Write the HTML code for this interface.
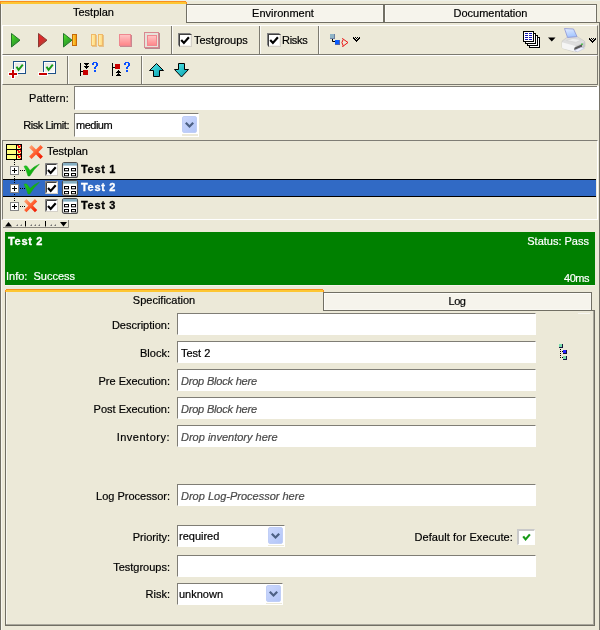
<!DOCTYPE html>
<html><head><meta charset="utf-8">
<style>
*{box-sizing:border-box;margin:0;padding:0}
html,body{width:600px;height:630px;overflow:hidden;background:#ece9d8;font-family:"Liberation Sans",sans-serif;font-size:11px;color:#000}
.a{position:absolute}
svg{position:absolute;overflow:visible}
.t{position:absolute;white-space:nowrap;line-height:13px;font-size:11px;will-change:transform;-webkit-text-stroke:.2px currentColor}
.r{text-align:right}
.in{position:absolute;background:#fff;border-top:1px solid #7f7d75;border-left:1px solid #7f7d75;border-bottom:1px solid #fff;border-right:1px solid #fff}
.it{font-style:italic;color:#4a4a4a}
.sep{position:absolute;width:2px;border-left:1px solid #7c7a70;border-right:1px solid #fbfaf5}
.cb{position:absolute;width:13px;height:13px;background:#fff;border-top:1px solid #808080;border-left:1px solid #808080;border-right:1px solid #f4f2ea;border-bottom:1px solid #f4f2ea}
.cb:before{content:"";position:absolute;left:0;top:0;width:11px;height:11px;border-top:1px solid #404040;border-left:1px solid #404040;border-right:1px solid #d4d0c8;border-bottom:1px solid #d4d0c8}
.dd:after{content:"";position:absolute;left:2px;top:5px;width:9px;height:6px;background:#4d6185;clip-path:polygon(0 1.600px,1.600px 0,4.500px 2.900px,7.400px 0,9px 1.600px,4.500px 6px)}
.dd{position:absolute;width:15px;height:17px;background:linear-gradient(135deg,#cbd7fc,#b3c6f8);border:1px solid #c0cef6;border-radius:2px}
.tab{position:absolute;background:#f6f4ec;border:1px solid #716f64;box-shadow:inset 1px 1px 0 #fdfcf8,inset -1px -1px 0 #f9f8f2}
.pm{position:absolute;width:9px;height:9px;background:#fff;border:1px solid #848484}
.pm:before{content:"";position:absolute;left:1px;top:3px;width:5px;height:1px;background:#000}
.pm:after{content:"";position:absolute;left:3px;top:1px;width:1px;height:5px;background:#000}
.hd{position:absolute;height:1px;width:5px;background:repeating-linear-gradient(90deg,#000 0 1px,transparent 1px 2px)}
</style></head><body>
<!-- window edges -->
<div class="a" style="left:0;top:0;width:600px;height:1px;background:#eef0e8"></div>
<div class="a" style="left:0;top:4px;width:1px;height:626px;background:#716f64"></div>
<div class="a" style="left:1px;top:4px;width:1px;height:626px;background:#f7f6ef"></div>
<div class="a" style="left:599px;top:22px;width:1px;height:608px;background:#75736a"></div>
<!-- top tabs -->
<div class="a" style="left:0;top:1px;width:186px;height:1px;background:#f98f20"></div>
<div class="a" style="left:0;top:2px;width:187px;height:2px;background:#fdc632"></div>
<div class="a" style="left:0;top:2px;width:1px;height:2px;background:#f98f20"></div>
<div class="a" style="left:186px;top:2px;width:1px;height:2px;background:#f98f20"></div>
<div class="tab" style="left:186px;top:4px;width:198px;height:19px"></div>
<div class="tab" style="left:384px;top:4px;width:213px;height:19px"></div>
<div class="a" style="left:596px;top:22px;width:4px;height:1px;background:#716f64"></div>
<div class="t" style="left:0;width:187px;top:6px;text-align:center">Testplan</div>
<div class="t" style="left:184px;width:198px;top:7px;text-align:center">Environment</div>
<div class="t" style="left:385px;width:211px;top:7px;text-align:center">Documentation</div>

<!-- toolbar 1 -->
<div class="a" style="left:2px;top:25px;width:596px;height:30px;border-top:1px solid #fff;border-left:1px solid #fff;border-bottom:1px solid #7c7a70;border-right:1px solid #7c7a70"></div>
<!-- toolbar 2 -->
<div class="a" style="left:2px;top:55px;width:596px;height:30px;border-top:1px solid #fff;border-left:1px solid #fff;border-bottom:1px solid #7c7a70;border-right:1px solid #7c7a70"></div>

<div class="sep" style="left:171px;top:26px;height:28px"></div>
<div class="sep" style="left:259px;top:26px;height:28px"></div>
<div class="sep" style="left:318px;top:26px;height:28px"></div>
<div class="sep" style="left:67px;top:56px;height:28px"></div>
<div class="sep" style="left:141px;top:56px;height:28px"></div>

<div class="cb" style="left:178px;top:33px"></div>
<div class="t" style="left:194px;top:34px">Testgroups</div>
<div class="cb" style="left:267px;top:33px"></div>
<div class="t" style="left:282px;top:34px;letter-spacing:-.3px">Risks</div>

<!-- ICONS1 -->
<svg style="left:0;top:0" width="600" height="90" viewBox="0 0 600 90">
<defs>
<linearGradient id="gG" x1="0" y1="0" x2="0.6" y2="1"><stop offset="0" stop-color="#5fe82a"/><stop offset=".5" stop-color="#38b828"/><stop offset="1" stop-color="#2c8a2c"/></linearGradient>
<linearGradient id="gR" x1="0" y1="0" x2="0.6" y2="1"><stop offset="0" stop-color="#f02424"/><stop offset=".5" stop-color="#d62c2c"/><stop offset="1" stop-color="#a04838"/></linearGradient>
<linearGradient id="gO" x1="0" y1="0" x2="1" y2="0"><stop offset="0" stop-color="#ffd84a"/><stop offset="1" stop-color="#f29400"/></linearGradient>
<linearGradient id="gP" x1="0" y1="0" x2="1" y2="0"><stop offset="0" stop-color="#fff0b4"/><stop offset="1" stop-color="#ffd878"/></linearGradient>
<linearGradient id="gS" x1="0" y1="0" x2="0" y2="1"><stop offset="0" stop-color="#ffc6c6"/><stop offset="1" stop-color="#ff8488"/></linearGradient>
<linearGradient id="gC" x1="0" y1="0" x2="1" y2="1"><stop offset="0" stop-color="#58eaea"/><stop offset="1" stop-color="#009aaa"/></linearGradient>
<linearGradient id="gB" x1="0" y1="0" x2="1" y2="1"><stop offset="0" stop-color="#e4e4e0"/><stop offset="1" stop-color="#fafaf8"/></linearGradient>
</defs>
<!-- play green -->
<path d="M11.5 33.5 L20 40.2 L11.5 47 Z" fill="url(#gG)" stroke="#23752a" stroke-width="1" stroke-linejoin="round"/>
<!-- play red -->
<path d="M38.5 33.5 L47 40.2 L38.5 47 Z" fill="url(#gR)" stroke="#8a3a34" stroke-width="1" stroke-linejoin="round"/>
<!-- play + bar -->
<path d="M63.5 33.5 L72 40.2 L63.5 47 Z" fill="url(#gG)" stroke="#23752a" stroke-width="1" stroke-linejoin="round"/>
<rect x="72.5" y="34.5" width="4" height="11" fill="url(#gO)" stroke="#c66a08" stroke-width="1"/>
<!-- pause -->
<rect x="92" y="35" width="5" height="12" fill="#e4b878" opacity=".8"/>
<rect x="99" y="35" width="5" height="12" fill="#e4b878" opacity=".8"/>
<rect x="91.5" y="34.5" width="4" height="11" fill="url(#gP)" stroke="#f0b868" stroke-width="1"/>
<rect x="98.5" y="34.5" width="4" height="11" fill="url(#gP)" stroke="#f0b868" stroke-width="1"/>
<!-- stop -->
<rect x="120" y="35" width="12" height="12" fill="#c88890"/>
<rect x="119.500" y="34.500" width="11" height="11" fill="url(#gS)" stroke="#ee8890" stroke-width="1"/>
<!-- stop framed -->
<rect x="145" y="33" width="15" height="16" fill="#b88890"/>
<rect x="144.500" y="32.500" width="14" height="15" fill="#e6e2da" stroke="#d88890" stroke-width="1"/>
<rect x="147.500" y="35.500" width="9" height="10" fill="url(#gS)" stroke="#f08890" stroke-width="1"/>
<!-- connector icon -->
<rect x="330" y="34" width="5" height="5" fill="#6e80a0"/>
<rect x="330" y="34" width="4" height="4" fill="#8fb4c6"/>
<path d="M332.500 39 V41.500 H335" fill="none" stroke="#000" stroke-width="1"/>
<rect x="335" y="40" width="5" height="5" fill="#5464a4"/>
<rect x="335" y="40" width="4" height="4" fill="#0a5cff"/>
<path d="M342.300 38.200 L343.300 39.200 L348 42.500 L343.300 46 L342.300 47 M343.300 39.200 Q340.500 42.500 343.300 46" fill="none" stroke="#e81010" stroke-width="1" stroke-linejoin="round"/>
<!-- double chevron -->
<path d="M353 37h1v1h-1zM355 37h1v1h-1zM357 37h1v1h-1zM359 37h1v1h-1zM353 38h1v1h-1zM354 38h1v1h-1zM356 38h1v1h-1zM358 38h1v1h-1zM359 38h1v1h-1zM354 39h1v1h-1zM355 39h1v1h-1zM357 39h1v1h-1zM358 39h1v1h-1zM355 40h1v1h-1zM356 40h1v1h-1zM357 40h1v1h-1zM356 41h1v1h-1z" fill="#000"/>
<!-- copy icon -->
<rect x="529.500" y="37.500" width="10" height="10" fill="#fff" stroke="#000"/>
<rect x="527.500" y="35.500" width="10" height="10" fill="#fff" stroke="#000"/>
<rect x="525.500" y="33.500" width="10" height="10" fill="#fff" stroke="#000"/>
<rect x="523.500" y="31.500" width="10" height="10" fill="#fff" stroke="#000"/>
<path d="M525 33.500h3M529 33.500h3M525 35.500h3M529 35.500h3M525 37.500h3M529 37.500h3M525 39.500h3M529 39.500h3" stroke="#1818b0" stroke-width="1"/>
<!-- dropdown tri -->
<path d="M548 37.500 H555.500 L551.750 41.500 Z" fill="#000"/>
<!-- printer -->
<linearGradient id="gPa" x1="0" y1="0" x2="0.300" y2="1"><stop offset="0" stop-color="#e4edff"/><stop offset="1" stop-color="#a4c6ff"/></linearGradient>
<path d="M562 42 Q562 40.500 563.500 40 L567 37.300 L577 36.500 L584.300 41 Q585 42 585 43 L585 46.500 L576.500 51.500 Q575 52 573 51.500 L563 48.500 Q562 48 562 47 Z" fill="#dedede" stroke="#c4c4c0" stroke-width=".6"/>
<path d="M562 42.300 L575.500 46 L575.500 51.700 L563 48.500 Q562 48 562 47 Z" fill="#f5f5f5"/>
<path d="M575.500 46 L585 42 L585 46.500 L575.500 51.700 Z" fill="#c9c9c9"/>
<path d="M566.500 40.500 L576 42.300 L581.500 39.800 L573 38.500 Z" fill="#efefef" stroke="#cfcfcf" stroke-width=".5"/>
<path d="M574.300 47.800 L582 44.300 L582 46.800 L574.300 50.300 Z" fill="#5a5a5a"/>
<path d="M574.500 50.300 L581 47.500 L584.500 48.200 L577.500 51.800 Z" fill="#f4f6ff" stroke="#a8b0e0" stroke-width=".4"/>
<path d="M564.500 28.500 L573.500 29 L577 36.600 L567.500 37.400 Z" fill="url(#gPa)" stroke="#8c94d4" stroke-width=".8" stroke-linejoin="round"/>
<rect x="581" y="43.600" width="2" height="1.200" fill="#40c840"/>
<!-- right chevron -->
<path d="M589 38h1v1h-1zM591 38h1v1h-1zM593 38h1v1h-1zM595 38h1v1h-1zM589 39h1v1h-1zM590 39h1v1h-1zM592 39h1v1h-1zM594 39h1v1h-1zM595 39h1v1h-1zM590 40h1v1h-1zM591 40h1v1h-1zM593 40h1v1h-1zM594 40h1v1h-1zM591 41h1v1h-1zM592 41h1v1h-1zM593 41h1v1h-1zM592 42h1v1h-1z" fill="#000"/>

<!-- toolbar 2 -->
<!-- add checked -->
<rect x="13.500" y="61.500" width="12" height="12" fill="#fff" stroke="#1c5088" stroke-width="1"/>
<rect x="15" y="63" width="9" height="9" fill="url(#gB)"/>
<path d="M16.500 66.700 L18.600 69.900 L22.800 64.700" fill="none" stroke="#179a17" stroke-width="2"/>
<path d="M11 69h4v3h3v4h-3v3h-4v-3h-3v-4h3z" fill="#fff" opacity=".92"/>
<path d="M12 70h2v3h3v2h-3v3h-2v-3h-3v-2h3z" fill="#c80000"/>
<!-- remove checked -->
<rect x="43.500" y="61.500" width="12" height="12" fill="#fff" stroke="#1c5088" stroke-width="1"/>
<rect x="45" y="63" width="9" height="9" fill="url(#gB)"/>
<path d="M46.500 66.700 L48.600 69.900 L52.800 64.700" fill="none" stroke="#179a17" stroke-width="2"/>
<rect x="38" y="72" width="10" height="4" fill="#fff" opacity=".92"/>
<rect x="39" y="73" width="8" height="2" fill="#c80000"/>
<!-- icon3 -->
<path d="M80.500 63 V76 M80.500 71.500 H83" stroke="#000" stroke-width="1"/>
<rect x="83" y="70" width="5" height="5" fill="#c80000"/>
<path d="M84 63h5v1h-1v1h-1v1h-1v-1h-1v-1h-1zM84 66h5v1h-1v1h-1v1h-1v-1h-1v-1h-1z" fill="#000"/>
<path d="M93 62h1v1h-1zM94 62h1v1h-1zM95 62h1v1h-1zM96 62h1v1h-1zM92 63h1v1h-1zM93 63h1v1h-1zM96 63h1v1h-1zM97 63h1v1h-1zM92 64h1v1h-1zM93 64h1v1h-1zM96 64h1v1h-1zM97 64h1v1h-1zM96 65h1v1h-1zM97 65h1v1h-1zM95 66h1v1h-1zM96 66h1v1h-1zM94 67h1v1h-1zM95 67h1v1h-1zM94 68h1v1h-1zM95 68h1v1h-1zM94 70h1v1h-1zM95 70h1v1h-1zM94 71h1v1h-1zM95 71h1v1h-1z" fill="#0a50ff"/>
<!-- icon4 -->
<path d="M112.500 63 V76 M112.500 67.500 H115" stroke="#000" stroke-width="1"/>
<rect x="115" y="64" width="5" height="5" fill="#c80000"/>
<path d="M116 73h5v-1h-1v-1h-1v-1h-1v1h-1v1h-1zM116 76h5v-1h-1v-1h-1v-1h-1v1h-1v1h-1z" fill="#000"/>
<path d="M125 62h1v1h-1zM126 62h1v1h-1zM127 62h1v1h-1zM128 62h1v1h-1zM124 63h1v1h-1zM125 63h1v1h-1zM128 63h1v1h-1zM129 63h1v1h-1zM124 64h1v1h-1zM125 64h1v1h-1zM128 64h1v1h-1zM129 64h1v1h-1zM128 65h1v1h-1zM129 65h1v1h-1zM127 66h1v1h-1zM128 66h1v1h-1zM126 67h1v1h-1zM127 67h1v1h-1zM126 68h1v1h-1zM127 68h1v1h-1zM126 70h1v1h-1zM127 70h1v1h-1zM126 71h1v1h-1zM127 71h1v1h-1z" fill="#0a50ff"/>
<!-- up arrow -->
<path d="M156.500 63.500 L163.500 70.500 L159.500 70.500 L159.500 76.500 L153.500 76.500 L153.500 70.500 L149.500 70.500 Z" fill="url(#gC)" stroke="#000" stroke-width="1" stroke-linejoin="round"/>
<!-- down arrow -->
<path d="M181.500 77 L188.500 69.500 L184.500 69.500 L184.500 63.500 L178.500 63.500 L178.500 69.500 L174.500 69.500 Z" fill="url(#gC)" stroke="#000" stroke-width="1" stroke-linejoin="round"/>
<!-- checkmarks in checkboxes -->
<path d="M181.200 40 L183.900 42.900 L188.900 37.300" fill="none" stroke="#000" stroke-width="2.200"/>
<path d="M270.200 40 L272.900 42.900 L277.900 37.300" fill="none" stroke="#000" stroke-width="2.200"/>
</svg>
<!-- /ICONS1 -->
<!-- ICONS2 -->

<!-- pattern -->
<div class="t r" style="left:0;width:69px;top:92px;letter-spacing:.2px">Pattern:</div>
<div class="in" style="left:74px;top:86px;width:525px;height:24px;border-right:0;border-top-color:#fff"></div><div class="a" style="left:74px;top:86px;width:523px;height:1px;background:#7f7d75"></div>
<div class="t r" style="left:0;width:69px;top:119px;letter-spacing:-.45px">Risk Limit:</div>
<div class="in" style="left:74px;top:113px;width:125px;height:24px"></div>
<div class="a" style="left:182px;top:134px;width:16px;height:2px;background:#ece9d8"></div>
<div class="t" style="left:76px;top:119px;letter-spacing:-.5px">medium</div>
<div class="dd" style="left:182px;top:116px"></div>

<!-- tree -->
<div class="a" style="left:2px;top:140px;width:596px;height:80px;border-top:1px solid #7f7d75;border-left:1px solid #7f7d75;border-bottom:1px solid #fff;border-right:1px solid #fff"></div>
<div class="t" style="left:47px;top:145px">Testplan</div>
<div class="a" style="left:3px;top:179px;width:593px;height:18px;background:#316ac5;border-top:1px solid #000;border-bottom:1px solid #000"></div>
<div class="t" style="left:81px;top:163px;font-weight:bold;letter-spacing:.7px;-webkit-text-stroke:.3px #000">Test 1</div>
<div class="t" style="left:81px;top:181px;font-weight:bold;letter-spacing:.7px;color:#fff;-webkit-text-stroke:.3px #fff">Test 2</div>
<div class="t" style="left:81px;top:199px;font-weight:bold;letter-spacing:.7px;-webkit-text-stroke:.3px #000">Test 3</div>
<!-- TREEICONS -->
<svg style="left:0;top:140px" width="600" height="90" viewBox="0 140 600 90">
<defs>
<linearGradient id="gX" x1="0" y1="0" x2="1" y2="1"><stop offset="0" stop-color="#ffa070"/><stop offset=".5" stop-color="#ff6030"/><stop offset="1" stop-color="#f01800"/></linearGradient>
<linearGradient id="gK" x1="0" y1="0" x2="1" y2="1"><stop offset="0" stop-color="#22d022"/><stop offset=".5" stop-color="#14b414"/><stop offset="1" stop-color="#0c980c"/></linearGradient>
<g id="tst">
<rect x=".5" y=".5" width="15" height="15" rx="2" fill="#fff" stroke="#505050" stroke-width="1.200"/>
<rect x="1" y="1" width="14" height="2.600" fill="#84aec2"/>
<rect x="2.500" y="6.500" width="4" height="2.300" fill="#fff" stroke="#000"/>
<rect x="9.500" y="6.500" width="4" height="2.300" fill="#fff" stroke="#000"/>
<rect x="2.500" y="11.500" width="4" height="2.300" fill="#fff" stroke="#000"/>
<rect x="9.500" y="11.500" width="4" height="2.300" fill="#fff" stroke="#000"/>
</g>
<g id="chk">
<rect x="0" y="0" width="13" height="13" fill="#fbfaf6"/>
<rect x=".5" y=".5" width="12" height="12" fill="#fff" stroke="#d4d0c8"/>
<path d="M.5 12.500V.5H12.500" fill="none" stroke="#808080"/>
<path d="M1.500 11.500V1.500H11.500" fill="none" stroke="#404040"/>
<path d="M3 7 L5.700 9.900 L10.700 4.300" fill="none" stroke="#000" stroke-width="2.200"/>
</g>
<g id="gck">
<path d="M0 2.300 Q1.500 1.500 3 2.200 L6 6.500 Q10 2.300 15.300 .2 Q9.500 5.500 5.800 12 L4 12 Q2.500 6.500 0 2.300 Z" fill="url(#gK)" stroke="#18a018" stroke-width=".5" stroke-linejoin="round"/>
</g>
<g id="rx">
<path d="M1.300 1.300 L12.700 12.700 M12.700 1.300 L1.300 12.700" stroke="url(#gX)" stroke-width="3.400" stroke-linecap="butt" fill="none"/>
</g>
</defs>
<!-- table icon -->
<rect x="6.500" y="144.500" width="15" height="15" fill="#ffff80" stroke="#000"/>
<path d="M6 149.500H22M6 154.500H22M16.500 144V160" stroke="#000"/>
<path d="M17 145h1v1h-1zM18 145h1v1h-1zM20 145h1v1h-1zM18 146h1v1h-1zM19 146h1v1h-1zM20 146h1v1h-1zM19 147h1v1h-1zM18 147h1v1h-1zM20 148h1v1h-1zM17 150h1v1h-1zM18 150h1v1h-1zM20 150h1v1h-1zM18 151h1v1h-1zM19 151h1v1h-1zM20 151h1v1h-1zM19 152h1v1h-1zM18 152h1v1h-1zM20 153h1v1h-1zM17 155h1v1h-1zM18 155h1v1h-1zM20 155h1v1h-1zM18 156h1v1h-1zM19 156h1v1h-1zM20 156h1v1h-1zM19 157h1v1h-1zM18 157h1v1h-1zM20 158h1v1h-1z" fill="#ff1818"/>
<!-- root X -->
<g transform="translate(29,145)"><use href="#rx"/></g>
<!-- dotted lines -->
<path d="M14.500 160V202" stroke="#000" stroke-dasharray="1 1"/>
<path d="M20 170.500H25M20 188.500H25M20 206.500H25" stroke="#000" stroke-dasharray="1 1"/>
<!-- plus boxes -->
<g id="pb"><rect x="10.500" y="166.500" width="8" height="8" fill="#fff" stroke="#848484"/><path d="M12 170.500H17M14.500 168V173" stroke="#000"/></g>
<use href="#pb" y="18"/><use href="#pb" y="36"/>
<!-- checks -->
<g transform="translate(24,164)"><use href="#gck"/></g>
<g transform="translate(24,182)"><use href="#gck"/></g>
<g transform="translate(24,199) scale(.95)"><use href="#rx"/></g>
<g transform="translate(45,163)"><use href="#chk"/></g>
<g transform="translate(45,181)"><use href="#chk"/></g>
<g transform="translate(45,199)"><use href="#chk"/></g>
<g transform="translate(62,162)"><use href="#tst"/></g>
<g transform="translate(62,180)"><use href="#tst"/></g>
<g transform="translate(62,198)"><use href="#tst"/></g>
<!-- slider -->
<path d="M3 227.500H68.500V220" fill="none" stroke="#8a887e"/>
<path d="M5 226.500H12L8.500 222Z M60 222H67L63.500 226.500Z" fill="#000"/>
<path d="M25.500 221V226.500M45.500 221V226.500" stroke="#000"/>
<path d="M16 226h2v-2zM20 226h2v-2zM30 226h2v-2zM34 226h2v-2zM38 226h2v-2zM50 226h2v-2zM54 226h2v-2z" fill="#707070"/>
</svg>
<!-- /TREEICONS -->

<!-- green -->
<div class="a" style="left:5px;top:232px;width:590px;height:53px;background:#008000"></div>
<div class="a" style="left:5px;top:285px;width:590px;height:1px;background:#f6f3ea"></div>
<div class="t" style="left:8px;top:235px;font-weight:bold;letter-spacing:.7px;color:#fff;-webkit-text-stroke:.3px #fff">Test 2</div>
<div class="t" style="left:6px;top:270px;color:#fff">Info:&nbsp; Success</div>
<div class="t r" style="left:400px;width:189px;top:235px;color:#fff">Status: Pass</div>
<div class="t r" style="left:400px;width:189px;top:272px;color:#fff;letter-spacing:-.5px">40ms</div>

<!-- bottom tabs -->
<div class="a" style="left:6px;top:289px;width:317px;height:1px;background:#f98f20"></div>
<div class="a" style="left:5px;top:290px;width:319px;height:2px;background:#fdc632"></div>
<div class="a" style="left:5px;top:290px;width:1px;height:2px;background:#f98f20"></div>
<div class="a" style="left:323px;top:290px;width:1px;height:2px;background:#f98f20"></div>
<div class="tab" style="left:323px;top:292px;width:269px;height:19px"></div>
<div class="t" style="left:5px;width:318px;top:294px;text-align:center">Specification</div>
<div class="t" style="left:323px;width:268px;top:295px;text-align:center;letter-spacing:-.4px">Log</div>
<!-- content panel -->
<div class="a" style="left:5px;top:292px;width:1px;height:334px;background:#716f64"></div>
<div class="a" style="left:6px;top:292px;width:1px;height:332px;background:#f7f6ef"></div>
<div class="a" style="left:592px;top:310px;width:3px;height:1px;background:#716f64"></div>
<div class="a" style="left:594px;top:310px;width:1px;height:316px;background:#716f64"></div>
<div class="a" style="left:593px;top:311px;width:1px;height:314px;background:#a9a79c"></div>
<div class="a" style="left:5px;top:625px;width:590px;height:1px;background:#716f64"></div>
<div class="a" style="left:6px;top:624px;width:588px;height:1px;background:#a9a79c"></div>
<div class="a" style="left:578px;top:313px;width:12px;height:1px;background:#f8f7f2"></div>

<!-- form -->
<svg style="left:555px;top:340px" width="16" height="24" viewBox="555 340 16 24">
<rect x="559" y="344" width="4" height="4" fill="#14143c"/><rect x="559" y="344" width="3" height="3" fill="#78dcac"/>
<rect x="563" y="350" width="4" height="4" fill="#14143c"/><rect x="563" y="350" width="3" height="3" fill="#2222ff"/>
<rect x="563" y="356" width="4" height="4" fill="#14143c"/><rect x="563" y="356" width="3" height="3" fill="#78dcac"/>
<path d="M560 349h1v1h-1zM560 351h1v1h-1zM560 353h1v1h-1zM560 355h1v1h-1zM560 357h1v1h-1zM562 351h1v1h-1zM562 357h1v1h-1z" fill="#000"/>
</svg>

<div class="t r" style="left:0;width:170px;top:319px">Description:</div>
<div class="in" style="left:177px;top:313px;width:359px;height:22px"></div>
<div class="t r" style="left:0;width:170px;top:347px">Block:</div>
<div class="in" style="left:177px;top:341px;width:359px;height:22px"></div>
<div class="t" style="left:181px;top:347px">Test 2</div>
<div class="t r" style="left:0;width:170px;top:375px">Pre Execution:</div>
<div class="in" style="left:177px;top:369px;width:359px;height:22px"></div>
<div class="t it" style="left:181px;top:375px;letter-spacing:-.2px">Drop Block here</div>
<div class="t r" style="left:0;width:170px;top:403px">Post Execution:</div>
<div class="in" style="left:177px;top:397px;width:359px;height:22px"></div>
<div class="t it" style="left:181px;top:403px;letter-spacing:-.2px">Drop Block here</div>
<div class="t r" style="left:0;width:170px;top:431px;letter-spacing:.5px">Inventory:</div>
<div class="in" style="left:177px;top:425px;width:359px;height:22px"></div>
<div class="t it" style="left:181px;top:431px">Drop inventory here</div>
<div class="t r" style="left:0;width:170px;top:490px">Log Processor:</div>
<div class="in" style="left:177px;top:484px;width:359px;height:22px"></div>
<div class="t it" style="left:181px;top:490px">Drop Log-Processor here</div>
<div class="t r" style="left:0;width:170px;top:531px">Priority:</div>
<div class="in" style="left:177px;top:525px;width:108px;height:22px"></div><div class="a" style="left:268px;top:545px;width:16px;height:1px;background:#ece9d8"></div>
<div class="t" style="left:179px;top:530px">required</div>
<div class="dd" style="left:268px;top:527px"></div>
<div class="t r" style="left:300px;width:213px;top:531px;letter-spacing:.1px">Default for Execute:</div>
<div class="a" style="left:517px;top:529px;width:18px;height:16px;background:#fff;border-top:2px solid #c9c9c9;border-left:2px solid #c9c9c9;border-right:1px solid #fff;border-bottom:1px solid #fff"></div>
<svg style="left:517px;top:529px" width="18" height="16" viewBox="517 529 18 16"><path d="M523.200 536.400 L525.600 539.400 L529.900 534.400" fill="none" stroke="#179a17" stroke-width="2.200"/></svg>
<div class="t r" style="left:0;width:170px;top:561px">Testgroups:</div>
<div class="in" style="left:177px;top:555px;width:359px;height:22px"></div>
<div class="t r" style="left:0;width:170px;top:588px">Risk:</div>
<div class="in" style="left:177px;top:583px;width:106px;height:22px"></div><div class="a" style="left:266px;top:603px;width:16px;height:1px;background:#ece9d8"></div>
<div class="t" style="left:179px;top:588px">unknown</div>
<div class="dd" style="left:266px;top:585px"></div>
</body></html>
